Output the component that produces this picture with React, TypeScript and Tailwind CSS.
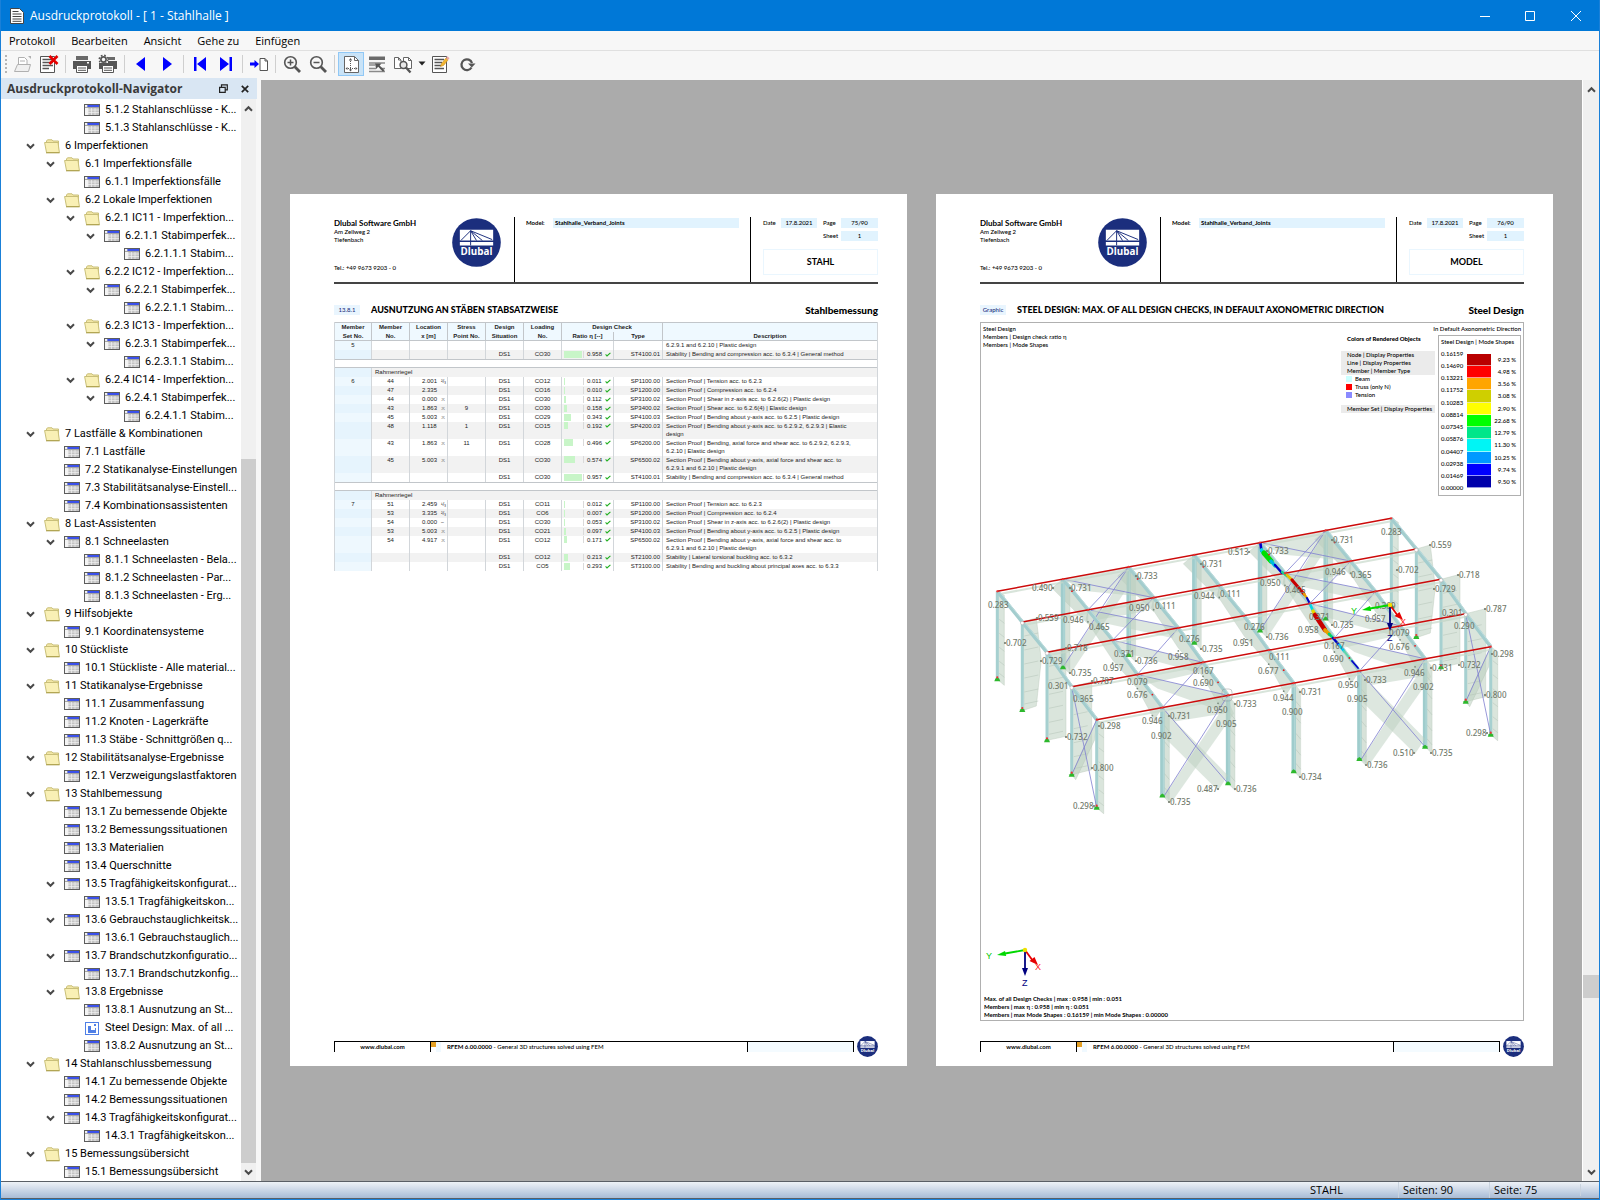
import type { ReactNode } from 'react'
import clsx from 'clsx'

type Kind = 'folder' | 'table' | 'picture'

interface TreeItem {
  level: number
  kind: Kind
  open: boolean
  label: string
}

const f = (level: number, label: string): TreeItem => ({ level, kind: 'folder', open: true, label })
const t = (level: number, label: string, open = false): TreeItem => ({ level, kind: 'table', open, label })

const tree: TreeItem[] = [
  t(3, '5.1.2 Stahlanschlüsse - K...'),
  t(3, '5.1.3 Stahlanschlüsse - K...'),
  f(1, '6 Imperfektionen'),
  f(2, '6.1 Imperfektionsfälle'),
  t(3, '6.1.1 Imperfektionsfälle'),
  f(2, '6.2 Lokale Imperfektionen'),
  f(3, '6.2.1 IC11 - Imperfektion...'),
  t(4, '6.2.1.1 Stabimperfek...', true),
  t(5, '6.2.1.1.1 Stabim...'),
  f(3, '6.2.2 IC12 - Imperfektion...'),
  t(4, '6.2.2.1 Stabimperfek...', true),
  t(5, '6.2.2.1.1 Stabim...'),
  f(3, '6.2.3 IC13 - Imperfektion...'),
  t(4, '6.2.3.1 Stabimperfek...', true),
  t(5, '6.2.3.1.1 Stabim...'),
  f(3, '6.2.4 IC14 - Imperfektion...'),
  t(4, '6.2.4.1 Stabimperfek...', true),
  t(5, '6.2.4.1.1 Stabim...'),
  f(1, '7 Lastfälle & Kombinationen'),
  t(2, '7.1 Lastfälle'),
  t(2, '7.2 Statikanalyse-Einstellungen'),
  t(2, '7.3 Stabilitätsanalyse-Einstell...'),
  t(2, '7.4 Kombinationsassistenten'),
  f(1, '8 Last-Assistenten'),
  t(2, '8.1 Schneelasten', true),
  t(3, '8.1.1 Schneelasten - Bela...'),
  t(3, '8.1.2 Schneelasten - Par...'),
  t(3, '8.1.3 Schneelasten - Erg...'),
  f(1, '9 Hilfsobjekte'),
  t(2, '9.1 Koordinatensysteme'),
  f(1, '10 Stückliste'),
  t(2, '10.1 Stückliste - Alle material...'),
  f(1, '11 Statikanalyse-Ergebnisse'),
  t(2, '11.1 Zusammenfassung'),
  t(2, '11.2 Knoten - Lagerkräfte'),
  t(2, '11.3 Stäbe - Schnittgrößen q...'),
  f(1, '12 Stabilitätsanalyse-Ergebnisse'),
  t(2, '12.1 Verzweigungslastfaktoren'),
  f(1, '13 Stahlbemessung'),
  t(2, '13.1 Zu bemessende Objekte'),
  t(2, '13.2 Bemessungssituationen'),
  t(2, '13.3 Materialien'),
  t(2, '13.4 Querschnitte'),
  t(2, '13.5 Tragfähigkeitskonfigurat...', true),
  t(3, '13.5.1 Tragfähigkeitskon...'),
  t(2, '13.6 Gebrauchstauglichkeitsk...', true),
  t(3, '13.6.1 Gebrauchstauglich...'),
  t(2, '13.7 Brandschutzkonfiguratio...', true),
  t(3, '13.7.1 Brandschutzkonfig...'),
  f(2, '13.8 Ergebnisse'),
  t(3, '13.8.1 Ausnutzung an St...'),
  { level: 3, kind: 'picture', open: false, label: 'Steel Design: Max. of all ...' },
  t(3, '13.8.2 Ausnutzung an St...'),
  f(1, '14 Stahlanschlussbemessung'),
  t(2, '14.1 Zu bemessende Objekte'),
  t(2, '14.2 Bemessungssituationen'),
  t(2, '14.3 Tragfähigkeitskonfigurat...', true),
  t(3, '14.3.1 Tragfähigkeitskon...'),
  f(1, '15 Bemessungsübersicht'),
  t(2, '15.1 Bemessungsübersicht'),
]

const indent = ['', 'pl-[23px]', 'pl-[43px]', 'pl-[63px]', 'pl-[83px]', 'pl-[103px]']

function Chevron({ up = false }: { up?: boolean }) {
  return (
    <svg width="9" height="7" viewBox="0 0 9 7" className={up ? 'rotate-180' : ''}>
      <path d="M1 1.3 L4.5 4.8 L8 1.3" fill="none" stroke="#4a4a4a" strokeWidth="2" />
    </svg>
  )
}

function TreeIcon({ kind }: { kind: Kind }) {
  if (kind === 'folder') {
    return (
      <svg width="16" height="15" viewBox="0 0 16 15" className="shrink-0">
        <path d="M2.5 3.5 V2 L3.5 0.8 H8 L9 2 H14.5 V12" fill="#f3e7a5" stroke="#c9bf79" />
        <path d="M0.6 3.5 H14 L15.4 13.5 H2.5 Z" fill="#f9f0b5" stroke="#c9bf79" />
        <path d="M2 13.8 H15.6" stroke="#a89c45" />
      </svg>
    )
  }
  if (kind === 'picture') {
    return (
      <svg width="16" height="13" viewBox="0 0 16 13" className="shrink-0">
        <rect x="1.5" y="0.5" width="13" height="12" fill="#fff" stroke="#4f7fe6" />
        <path d="M4 4 H7 V8 H11 V6 H12 V11 H4 Z" fill="#4f7fe6" />
        <rect x="10" y="2" width="2" height="2" fill="#4f7fe6" />
      </svg>
    )
  }
  return (
    <svg width="16" height="12" viewBox="0 0 16 12" className="shrink-0">
      <rect x="0.5" y="0.5" width="15" height="11" fill="#c4c4c4" stroke="#5d5d5d" />
      <path d="M1 1 H3 V3 H1 Z M1 4 H4 V11 H1 Z" fill="#f5f5f5" />
      <path d="M3.5 1 H15 V3 H3.5 Z" fill="#3a50f0" />
      <path d="M1 3.5 H15 M1 6 H15 M1 8.5 H15 M4 4 V11 M7.5 4 V11 M11 4 V11" stroke="#f2f2f2" strokeWidth="0.7" />
      <path d="M1 3.4 H15" stroke="#6b6b6b" strokeWidth="0.6" />
    </svg>
  )
}

function Sep() {
  return (
    <div className="flex w-[7px] justify-center">
      <div className="h-[18px] w-px bg-[#cfcfcf]" />
    </div>
  )
}

function Tool({ label, active, children }: { label: string; active?: boolean; children: ReactNode }) {
  return (
    <button
      aria-label={label}
      className={clsx(
        'flex h-[24px] w-[26px] items-center justify-center border',
        active ? 'border-[#90c8f6] bg-[#c9e3f7]' : 'border-transparent',
      )}
    >
      <svg width="20" height="20" viewBox="0 0 20 20">
        {children}
      </svg>
    </button>
  )
}

const pageLines = 'M3.5 5.5 H13 M3.5 8.5 H14 M3.5 11.5 H14 M3.5 14.5 H10'

function Toolbar() {
  return (
    <div className="flex h-[28px] shrink-0 items-center border-t border-[#e0e0e0] bg-[#f7f7f7] pb-[2px]">
      <div className="flex w-[9px] justify-center">
        <div className="h-[18px] border-l-2 border-dotted border-[#b5b5b5]" />
      </div>
      <Tool label="Öffnen">
        <path d="M5.5 10 V3.5 H11.5 L14 6 V10" fill="#fff" stroke="#b0b0b0" />
        <path d="M7 7 H12" stroke="#b0b0b0" />
        <path d="M1.5 17.5 L4.5 10.5 H17.5 L15.5 17.5 Z" fill="#f0f0f0" stroke="#b0b0b0" />
        <path d="M15 2 L18 2 L18 5 Z" fill="#b0b0b0" />
      </Tool>
      <Tool label="Protokoll löschen">
        <path d="M1.5 2.5 H15.5 V18.5 H1.5 Z" fill="#fff" stroke="#555" />
        <path d={pageLines} stroke="#555" strokeWidth="1.3" />
        <path d="M10.5 2 L18.5 10 M18.5 2 L10.5 10" stroke="#e60000" strokeWidth="2.6" />
      </Tool>
      <Sep />
      <Tool label="Drucken">
        <path d="M4 2 H16 V6 H4 Z" fill="#6a6a6a" />
        <path d="M1 7 H19 V15 H1 Z" fill="#555" />
        <path d="M4.5 11.5 H15.5 V18.5 H4.5 Z" fill="#fff" stroke="#555" />
        <path d="M6 14 H14 M6 16.3 H14" stroke="#555" />
        <rect x="15" y="8" width="2" height="1.5" fill="#fff" />
      </Tool>
      <Tool label="Drucker einrichten">
        <path d="M10 3 H17 V6 H10 Z" fill="#6a6a6a" />
        <path d="M1 9 H19 V15 H1 Z M10 7 H19 V9 H10 Z" fill="#555" />
        <path d="M4.5 11.5 H15.5 V18.5 H4.5 Z" fill="#fff" stroke="#555" />
        <path d="M6 14 H14 M6 16.3 H14" stroke="#555" />
        <circle cx="5.5" cy="5.5" r="4.3" fill="none" stroke="#555" strokeWidth="1.4" strokeDasharray="1.7 1.7" />
        <circle cx="5.5" cy="5.5" r="2.6" fill="#f7f7f7" stroke="#555" strokeWidth="1.7" />
      </Tool>
      <Sep />
      <Tool label="Zurück">
        <path d="M14 3 V17 L5 10 Z" fill="#0000ff" />
      </Tool>
      <Tool label="Weiter">
        <path d="M6 3 V17 L15 10 Z" fill="#0000ff" />
      </Tool>
      <Sep />
      <Tool label="Erste Seite">
        <path d="M4 3 H6.5 V17 H4 Z M16 3 V17 L7 10 Z" fill="#0000ff" />
      </Tool>
      <Tool label="Letzte Seite">
        <path d="M16 3 H13.5 V17 H16 Z M4 3 V17 L13 10 Z" fill="#0000ff" />
      </Tool>
      <Sep />
      <Tool label="Gehe zu Seite">
        <path d="M1 8.5 H5.5 V6 L10 10 L5.5 14 V11.5 H1 Z" fill="#0000ff" />
        <path d="M11 4.5 H16 L18.5 7 V16.5 H11 Z" fill="#fff" stroke="#555" />
        <path d="M16 4.5 V7 H18.5" fill="none" stroke="#555" />
      </Tool>
      <Sep />
      <Tool label="Vergrößern">
        <circle cx="8.5" cy="8.5" r="5.8" fill="none" stroke="#555" strokeWidth="1.6" />
        <path d="M8.5 5.5 V11.5 M5.5 8.5 H11.5" stroke="#555" strokeWidth="1.5" />
        <path d="M12.8 12.8 L18 18" stroke="#555" strokeWidth="2.8" />
      </Tool>
      <Tool label="Verkleinern">
        <circle cx="8.5" cy="8.5" r="5.8" fill="none" stroke="#555" strokeWidth="1.6" />
        <path d="M5.5 8.5 H11.5" stroke="#555" strokeWidth="1.5" />
        <path d="M12.8 12.8 L18 18" stroke="#555" strokeWidth="2.8" />
      </Tool>
      <Sep />
      <Tool label="Ganze Seite" active>
        <path d="M3.5 2.5 H13.5 L17.5 6.5 V18.5 H3.5 Z" fill="#fff" stroke="#666" />
        <path d="M13.5 2.5 V6.5 H17.5" fill="none" stroke="#666" />
        <path d="M9.5 5 V16 M5 14.5 H16" stroke="#555" strokeDasharray="1 1" />
        <path d="M7.8 6.5 L9.5 4 L11.2 6.5 Z M7.8 15.5 L9.5 17.5 L11.2 15.5 Z M6.5 13 L4.5 14.5 L6.5 16 Z M14.5 13 L16.5 14.5 L14.5 16 Z" fill="#555" />
      </Tool>
      <Tool label="Auswahl">
        <path d="M2 2.5 H18 V6 H2 Z" fill="#6a6a6a" />
        <path d="M2 9 H18 M2 11 H8 M2 14.5 H9 M2 17.5 H18 M13 14.5 H18" stroke="#8a8a8a" strokeWidth="1.4" />
        <path d="M8 9.5 L14.5 9.5 L12.6 11.4 L17.5 16.2 L16 17.7 L11.2 12.8 L9.2 15 Z" fill="#555" />
      </Tool>
      <Tool label="Suchen">
        <path d="M1.5 3.5 H5.5 L8 6 V14.5 H1.5 Z M10.5 3.5 H15.5 L18.5 6.5 V14.5 H10.5 Z" fill="#fff" stroke="#666" />
        <path d="M5.5 3.5 V6 H8 M15.5 3.5 V6.5 H18.5" fill="none" stroke="#666" />
        <circle cx="10.5" cy="11" r="3.4" fill="#e8e8e8" stroke="#555" strokeWidth="1.5" />
        <path d="M13 13.5 L17.5 18.5" stroke="#555" strokeWidth="2.4" />
      </Tool>
      <div className="flex w-[11px] justify-center">
        <svg width="8" height="5" viewBox="0 0 8 5">
          <path d="M0.5 0.5 H7.5 L4 4.5 Z" fill="#222" />
        </svg>
      </div>
      <Tool label="Bearbeiten">
        <path d="M2.5 2.5 H16.5 V18.5 H2.5 Z" fill="#fff" stroke="#555" />
        <path d="M4.5 5.5 H14 M4.5 8.5 H12 M4.5 11.5 H11 M4.5 14.5 H14" stroke="#555" strokeWidth="1.3" />
        <path d="M10.5 12.5 L11.5 9.5 L16 4 L18 6 L13.5 11.5 Z" fill="#f2b632" stroke="#c98d1b" strokeWidth="0.6" />
        <path d="M16 4 L17.5 2.2 L19.5 4.2 L18 6 Z" fill="#e8a5a5" />
      </Tool>
      <div className="pl-px">
        <Tool label="Aktualisieren">
          <path d="M14.5 13.5 A5.4 5.4 0 1 1 15 9" fill="none" stroke="#555" strokeWidth="2.3" />
          <path d="M11 9.5 H18.5 L14.8 13.5 Z" fill="#555" />
        </Tool>
      </div>
    </div>
  )
}

function Navigator() {
  return (
    <aside className="flex w-[256px] shrink-0 flex-col bg-white">
      <div className="flex h-[21px] shrink-0 items-center bg-[#d9e6f3] pl-[6px]">
        <h2 className="flex-1 font-['Open_Sans',sans-serif] text-[12px] font-bold text-[#3a3a3a]">
          Ausdruckprotokoll-Navigator
        </h2>
        <button aria-label="Andocken" className="flex w-[20px] justify-center">
          <svg width="9" height="9" viewBox="0 0 9 9">
            <path d="M2.5 3 V0.8 H8.3 V5.8 H6.5 M0.6 3.3 H6.2 V8.3 H0.6 Z" fill="none" stroke="#222" strokeWidth="1.2" />
          </svg>
        </button>
        <button aria-label="Schließen" className="flex w-[24px] justify-center">
          <svg width="8" height="8" viewBox="0 0 8 8">
            <path d="M0.8 0.8 L7.2 7.2 M7.2 0.8 L0.8 7.2" stroke="#222" strokeWidth="1.7" />
          </svg>
        </button>
      </div>
      <div className="flex min-h-0 flex-1">
        <ul className="min-w-0 flex-1 overflow-hidden pt-[2px]">
          {tree.map((item) => (
            <li key={item.label} className={clsx('flex h-[18px] items-center whitespace-nowrap', indent[item.level])}>
              <span className="w-[20px] shrink-0 pl-[2px]">{item.open && <Chevron />}</span>
              <TreeIcon kind={item.kind} />
              <span className="pl-[5px] font-['Roboto',sans-serif] text-[11px] text-black">{item.label}</span>
            </li>
          ))}
        </ul>
        <div className="flex w-[15px] flex-col items-center bg-[#f0f0f0]">
          <div className="flex h-[18px] items-center">
            <Chevron up />
          </div>
          <div className="flex w-full flex-1 flex-col">
            <div className="flex-[342]" />
            <div className="flex-[704] bg-[#cdcdcd]" />
          </div>
          <div className="flex h-[18px] items-center">
            <Chevron />
          </div>
        </div>
        <div className="w-px bg-[#f7f7f7]" />
      </div>
    </aside>
  )
}

function Logo({ size }: { size: number }) {
  return (
    <svg width={size} height={size} viewBox="0 0 50 50" className="shrink-0">
      <circle cx="25" cy="25" r="24.8" fill="#1b2e7d" />
      <path d="M8 12 H42 V23 H8 Z" fill="#fff" />
      <path d="M8 24.5 H42 V28 H8 Z" fill="#fff" />
      <path d="M19 13 V28 M19 13 L9 23 M19 13 L25 23 M19 13 L31 23 M19 13 L41 22" stroke="#1b2e7d" strokeWidth="1" fill="none" />
      <text x="25" y="38" textAnchor="middle" fill="#fff" fontSize="10" fontWeight="700" fontFamily="'Open Sans', sans-serif">
        Dlubal
      </text>
    </svg>
  )
}

interface SheetProps {
  pageNo: string
  part: string
  badge: string
  title: string
  right: string
  children: ReactNode
}

function Sheet({ pageNo, part, badge, title, right, children }: SheetProps) {
  return (
    <article className="flex aspect-[617/872] min-w-0 flex-1 flex-col bg-white pt-[23px] pr-[29px] pb-[9px] pl-[44px] font-['Lato',sans-serif] text-[6px] leading-[8px] font-medium text-black">
      <header className="flex h-[67px] shrink-0 border-b-2 border-[#444]">
        <div className="flex w-[181px] justify-between border-r border-black pt-px pr-[13px]">
          <address className="not-italic">
            <p className="text-[8px] leading-[10px] font-bold">Dlubal Software GmbH</p>
            <p>Am Zellweg 2</p>
            <p>Tiefenbach</p>
            <p className="pt-[20px]">Tel.: +49 9673 9203 - 0</p>
          </address>
          <Logo size={49} />
        </div>
        <div className="flex flex-1 items-start border-r border-black pt-px pr-[11px] pl-[11px] leading-[10px] font-bold">
          <span className="w-[27px]">Model:</span>
          <span className="flex-1 bg-[#e1f3fe] pl-[2px]">Stahlhalle_Verband_Joints</span>
        </div>
        <div className="w-[127px] pt-px pl-[12px] leading-[10px]">
          <div className="grid grid-cols-[18px_36px_24px_37px] gap-y-[3px]">
            <span>Date</span>
            <span className="bg-[#e1f3fe] text-center">17.8.2021</span>
            <span className="pl-[6px]">Page</span>
            <span className="bg-[#e1f3fe] text-center">{pageNo}</span>
            <span className="col-start-3 pl-[6px]">Sheet</span>
            <span className="bg-[#e1f3fe] text-center">1</span>
          </div>
          <div className="mt-[8px] flex h-[26px] items-center justify-center border border-[#eaf6fe] text-[9px] font-bold">
            {part}
          </div>
        </div>
      </header>
      <div className="mt-[21px] flex h-[10px] shrink-0 items-center leading-[10px]">
        <span className="w-[26px] bg-[#e9f5fe] text-center text-[#1b2e7d]">{badge}</span>
        <h1 className="flex-1 pl-[11px] text-[9px] font-black whitespace-nowrap">{title}</h1>
        <h2 className="text-[10px] font-black">{right}</h2>
      </div>
      <div className="mt-[7px] flex min-h-0 flex-1 flex-col">{children}</div>
      <footer className="mt-[15px] flex shrink-0 items-start gap-[3px]">
        <div className="mt-[5px] flex h-[11px] flex-1 border-x border-t border-black leading-[10px]">
          <a href="#dlubal" className="w-[96px] border-r border-black text-center font-bold">
            www.dlubal.com
          </a>
          <div className="flex w-[317px] border-r border-black">
            <div className="h-[5px] w-[5px] bg-[#e5a024]" />
            <div className="mr-[6px] w-[5px] bg-[#f0f9ff]" />
            <span>
              <b>RFEM 6.00.0000</b> - General 3D structures solved using FEM
            </span>
          </div>
          <div className="flex-1 bg-[#f4fbff]" />
        </div>
        <Logo size={21} />
      </footer>
    </article>
  )
}

interface Check {
  set?: string
  member?: string
  loc?: string
  mark?: string
  stress?: string
  co?: string
  ratio?: string
  type?: string
  desc: string[]
}

interface Group {
  name?: string
  rows: Check[]
}

const groups: Group[] = [
  {
    rows: [
      { set: '5', desc: ['6.2.9.1 and 6.2.10 | Plastic design'] },
      { co: 'CO30', ratio: '0.958', type: 'ST4100.01', desc: ['Stability | Bending and compression acc. to 6.3.4 | General method'] },
    ],
  },
  {
    name: 'Rahmenriegel',
    rows: [
      { set: '6', member: '44', loc: '2.001', mark: '²/₃', co: 'CO12', ratio: '0.011', type: 'SP1100.00', desc: ['Section Proof | Tension acc. to 6.2.3'] },
      { member: '47', loc: '2.335', co: 'CO16', ratio: '0.010', type: 'SP1200.00', desc: ['Section Proof | Compression acc. to 6.2.4'] },
      { member: '44', loc: '0.000', mark: '≍', co: 'CO30', ratio: '0.112', type: 'SP3100.02', desc: ['Section Proof | Shear in z-axis acc. to 6.2.6(2) | Plastic design'] },
      { member: '43', loc: '1.863', mark: '≍', stress: '9', co: 'CO30', ratio: '0.158', type: 'SP3400.02', desc: ['Section Proof | Shear acc. to 6.2.6(4) | Elastic design'] },
      { member: '45', loc: '5.003', mark: '≍', co: 'CO29', ratio: '0.343', type: 'SP4100.03', desc: ['Section Proof | Bending about y-axis acc. to 6.2.5 | Plastic design'] },
      { member: '48', loc: '1.118', stress: '1', co: 'CO15', ratio: '0.192', type: 'SP4200.03', desc: ['Section Proof | Bending about y-axis acc. to 6.2.9.2, 6.2.9.3 | Elastic', 'design'] },
      { member: '43', loc: '1.863', mark: '≍', stress: '11', co: 'CO28', ratio: '0.496', type: 'SP6200.00', desc: ['Section Proof | Bending, axial force and shear acc. to 6.2.9.2, 6.2.9.3,', '6.2.10 | Elastic design'] },
      { member: '45', loc: '5.003', mark: '≍', co: 'CO30', ratio: '0.574', type: 'SP6500.02', desc: ['Section Proof | Bending about y-axis, axial force and shear acc. to', '6.2.9.1 and 6.2.10 | Plastic design'] },
      { co: 'CO30', ratio: '0.957', type: 'ST4100.01', desc: ['Stability | Bending and compression acc. to 6.3.4 | General method'] },
    ],
  },
  {
    name: 'Rahmenriegel',
    rows: [
      { set: '7', member: '51', loc: '2.459', mark: '¹/₃', co: 'CO11', ratio: '0.012', type: 'SP1100.00', desc: ['Section Proof | Tension acc. to 6.2.3'] },
      { member: '53', loc: '3.335', mark: '²/₃', co: 'CO6', ratio: '0.007', type: 'SP1200.00', desc: ['Section Proof | Compression acc. to 6.2.4'] },
      { member: '54', loc: '0.000', mark: '–', co: 'CO30', ratio: '0.053', type: 'SP3100.02', desc: ['Section Proof | Shear in z-axis acc. to 6.2.6(2) | Plastic design'] },
      { member: '53', loc: '5.003', mark: '≍', co: 'CO21', ratio: '0.097', type: 'SP4100.03', desc: ['Section Proof | Bending about y-axis acc. to 6.2.5 | Plastic design'] },
      { member: '54', loc: '4.917', mark: '≍', co: 'CO12', ratio: '0.171', type: 'SP6500.02', desc: ['Section Proof | Bending about y-axis, axial force and shear acc. to', '6.2.9.1 and 6.2.10 | Plastic design'] },
      { co: 'CO12', ratio: '0.213', type: 'ST2100.00', desc: ['Stability | Lateral torsional buckling acc. to 6.3.2'] },
      { co: 'CO5', ratio: '0.293', type: 'ST3100.00', desc: ['Stability | Bending and buckling about principal axes acc. to 6.3.3'] },
    ],
  },
]

const cell = 'border-r border-[#d2d6da] p-0 align-top'

function CheckRow({ row, shaded }: { row: Check; shaded: boolean }) {
  const tall = row.desc.length > 1
  return (
    <tr className={clsx(tall ? 'h-[17px] leading-[8px]' : 'h-[9px] leading-[9px]', shaded ? 'bg-[#f2f2f2]' : 'bg-white')}>
      <td className={clsx(cell, shaded ? 'bg-[#e6f4fd]' : 'bg-[#eef8fe]', 'text-center')}>{row.set}</td>
      <td className={clsx(cell, 'text-center')}>{row.member}</td>
      <td className={cell}>
        <div className="flex pl-[12px]">
          <span className="w-[19px]">{row.loc}</span>
          <span className="text-[5px]">{row.mark}</span>
        </div>
      </td>
      <td className={clsx(cell, 'text-center')}>{row.stress}</td>
      <td className={clsx(cell, 'text-center')}>{row.co && 'DS1'}</td>
      <td className={clsx(cell, 'text-center')}>{row.co}</td>
      <td className={cell}>
        {row.ratio && (
          <div className="flex items-center pl-[2px]">
            <div className="mr-[3px] flex h-[7px] w-[20px] border-r border-[#dadada]">
              <div className="bg-[#c8f5c8]" style={{ width: `${Math.max(Number(row.ratio) * 100, 5)}%` }} />
            </div>
            <span className="w-[18px]">{row.ratio}</span>
            <svg width="6" height="5" viewBox="0 0 6 5">
              <path d="M0.6 2.4 L2 4 L5.4 0.8" fill="none" stroke="#1fae1f" strokeWidth="1.1" />
            </svg>
          </div>
        )}
      </td>
      <td className={clsx(cell, 'pr-[2px] text-right')}>{row.type}</td>
      <td className="p-0 pl-[3px] align-top whitespace-nowrap">
        {row.desc.map((line) => (
          <div key={line}>{line}</div>
        ))}
      </td>
    </tr>
  )
}

function CheckTable() {
  return (
    <table className="w-full table-fixed border-separate border-spacing-0 border-x border-[#d2d6da] font-['Liberation_Sans',sans-serif] text-[6px] leading-[9px] font-normal text-[#222]">
      <colgroup>
        <col className="w-[37px]" />
        <col className="w-[38px]" />
        <col className="w-[38px]" />
        <col className="w-[38px]" />
        <col className="w-[38px]" />
        <col className="w-[38px]" />
        <col className="w-[52px]" />
        <col className="w-[49px]" />
        <col />
      </colgroup>
      <thead className="bg-[#eff9ff] font-bold">
        <tr className="h-[10px]">
          <th className="border-t border-r border-[#c2c6ca] p-0">Member</th>
          <th className="border-t border-r border-[#c2c6ca] p-0">Member</th>
          <th className="border-t border-r border-[#c2c6ca] p-0">Location</th>
          <th className="border-t border-r border-[#c2c6ca] p-0">Stress</th>
          <th className="border-t border-r border-[#c2c6ca] p-0">Design</th>
          <th className="border-t border-r border-[#c2c6ca] p-0">Loading</th>
          <th colSpan={2} className="border-t border-r border-[#c2c6ca] p-0">Design Check</th>
          <th className="border-t border-[#c2c6ca] p-0" />
        </tr>
        <tr className="h-[9px] leading-[8px]">
          <th className="border-r border-b border-[#c2c6ca] p-0">Set No.</th>
          <th className="border-r border-b border-[#c2c6ca] p-0">No.</th>
          <th className="border-r border-b border-[#c2c6ca] p-0">x [m]</th>
          <th className="border-r border-b border-[#c2c6ca] p-0">Point No.</th>
          <th className="border-r border-b border-[#c2c6ca] p-0">Situation</th>
          <th className="border-r border-b border-[#c2c6ca] p-0">No.</th>
          <th className="border-r border-b border-[#c2c6ca] p-0">Ratio η [--]</th>
          <th className="border-r border-b border-[#c2c6ca] p-0">Type</th>
          <th className="border-b border-[#c2c6ca] p-0">Description</th>
        </tr>
      </thead>
      {groups.map((group, g) => (
        <tbody key={g}>
          {g > 0 && (
            <>
              <tr className="h-[9px]">
                <td colSpan={9} className="border-y border-[#c2c6ca] p-0" />
              </tr>
              <tr className="h-[9px] bg-[#f2f2f2]">
                <td className="border-r border-[#d2d6da] bg-[#e6f4fd] p-0" />
                <td colSpan={8} className="p-0 pl-[3px]">
                  {group.name}
                </td>
              </tr>
            </>
          )}
          {group.rows.map((row, i) => (
            <CheckRow key={i} row={row} shaded={i % 2 === 1} />
          ))}
        </tbody>
      ))}
    </table>
  )
}

/* ---------- hall model ---------- */

type Pt = [number, number]

// axis points of the first frame, the other frames are shifted by STEP
const BASE: Pt[] = [
  [27.3, 91.3],
  [52.3, 122],
  [77, 152.3],
  [101.7, 186.7],
  [126.7, 219.7],
]
const STEP: Pt = [65.67, -12.17]
const HEIGHT = 88

const node = (frame: number, j: number, dx = 0, dy = 0): Pt => [
  BASE[j][0] + frame * STEP[0] + dx,
  BASE[j][1] + frame * STEP[1] + dy,
]
const poly = (pts: Pt[]) => pts.map((p) => `${p[0].toFixed(1)},${p[1].toFixed(1)}`).join(' ')

const labels: [number, number, string][] = [
  [258, 52, '0.513'], [232, 64, '0.731'], [167, 76, '0.733'], [62, 88, '0.490'], [101, 88, '0.731'],
  [224, 96, '0.944'], [250, 94, '0.111'], [18, 105, '0.283'], [68, 118, '0.559'], [159, 108, '0.950'],
  [185, 106, '0.111'], [93, 120, '0.946'], [119, 127, '0.465'], [274, 127, '0.276'], [36, 143, '0.702'],
  [97, 148, '0.718'], [209, 139, '0.276'], [232, 149, '0.735'], [263, 143, '0.951'], [144, 154, '0.371'],
  [198, 157, '0.958'], [72, 161, '0.729'], [167, 161, '0.736'], [133, 168, '0.957'], [101, 173, '0.735'],
  [223, 171, '0.167'], [78, 186, '0.301'], [123, 181, '0.787'], [157, 182, '0.079'], [223, 183, '0.690'],
  [103, 199, '0.365'], [157, 195, '0.676'], [266, 204, '0.733'], [172, 221, '0.946'], [200, 216, '0.731'],
  [237, 210, '0.950'], [246, 224, '0.905'], [130, 226, '0.298'], [181, 236, '0.902'], [97, 237, '0.732'],
  [123, 268, '0.800'], [103, 306, '0.298'], [200, 302, '0.735'], [227, 289, '0.487'], [266, 289, '0.736'],
  [363, 40, '0.731'], [411, 32, '0.283'], [461, 45, '0.559'], [298, 51, '0.733'], [355, 72, '0.946'],
  [381, 75, '0.365'], [428, 70, '0.702'], [489, 75, '0.718'], [290, 83, '0.950'], [315, 90, '0.465'],
  [465, 89, '0.729'], [405, 106, '0.369'], [395, 119, '0.957'], [472, 113, '0.301'], [516, 109, '0.787'],
  [484, 126, '0.290'], [328, 130, '0.958'], [339, 117, '0.371'], [363, 125, '0.735'], [298, 137, '0.736'],
  [419, 133, '0.079'], [419, 147, '0.676'], [354, 146, '0.167'], [353, 159, '0.690'], [523, 154, '0.298'],
  [299, 157, '0.111'], [288, 171, '0.677'], [462, 168, '0.731'], [490, 165, '0.732'], [434, 173, '0.946'],
  [368, 185, '0.950'], [396, 180, '0.733'], [331, 192, '0.731'], [303, 198, '0.944'], [443, 187, '0.902'],
  [377, 199, '0.905'], [312, 212, '0.900'], [516, 195, '0.800'], [496, 233, '0.298'], [423, 253, '0.510'],
  [462, 253, '0.735'], [397, 265, '0.736'], [331, 277, '0.734'],
]

// values with a measuring dot before or behind the number
const dotBefore = ['0.731', '0.733', '0.702', '0.735', '0.736', '0.729', '0.734', '0.732', '0.800', '0.559', '0.718', '0.787']
const dotBehind = ['0.513', '0.490', '0.487', '0.510']

function dotX(x: number, y: number, text: string) {
  // the brace values at the column feet carry the dot behind
  if (text === '0.298') return y > 230 ? x + 21 : x - 1
  if (dotBefore.includes(text)) return x - 1
  if (dotBehind.includes(text)) return x + 21
  return null
}

const FILL = '#bccfbf'

function EndWall({ i }: { i: number }) {
  return (
    <g>
      <g fill={FILL} fillOpacity="0.55" stroke="#b5c6b7" strokeWidth="0.4">
        <polygon points={poly([node(i, 0), node(i, 0, 7, 4), node(i, 0, 7, 94), node(i, 0, 0, HEIGHT)])} />
        <polygon
          points={poly([node(i, 1), node(i, 1, 14, -4), node(i, 1, 19, 38), node(i, 1, 14, 84), node(i, 1, 2, HEIGHT)])}
        />
        <polygon points={poly([node(i, 2), node(i, 2, 19, -5), node(i, 2, 19, 84), node(i, 2, 0, HEIGHT)])} />
        <polygon points={poly([node(i, 3), node(i, 3, 20, -5), node(i, 3, 20, 83), node(i, 3, 0, HEIGHT)])} />
        <polygon points={poly([node(i, 4), node(i, 4, 7, 5), node(i, 4, 7, 94), node(i, 4, 0, HEIGHT)])} />
        <polygon points={poly([node(i, 4), node(i, 3, 0, HEIGHT), node(i, 3, 4, 93), node(i, 4, -2, 20)])} />
      </g>
      {[0, 1, 2, 3, 4].map((j) =>
        [14, 28, 42, 56, 70, 82].map((dy) => {
          const [x, y] = node(i, j, 2, dy)
          const end = j === 0 || j === 4
          return <path key={`${j}-${dy}`} d={`M${x} ${y} l${end ? 5 : 14} ${end ? 4 : -3}`} stroke="#b3c3b6" strokeWidth="0.5" />
        }),
      )}
      {[0, 1, 2, 3, 4].map((j) => {
        const [x, y] = node(i, j)
        return <path key={j} d={`M${x} ${y} v${HEIGHT}`} stroke="#a6d0d0" strokeWidth="3" />
      })}
    </g>
  )
}

function BracedBay({ i }: { i: number }) {
  return (
    <g>
      <g fill={FILL} fillOpacity="0.5">
        <polygon points={poly([node(i, 0), node(i + 1, 0), node(i + 1, 1), node(i, 0, 22, 12)])} />
        <polygon points={poly([node(i, 1), node(i + 1, 1), node(i + 1, 1, -10, 14), node(i, 1, 10, 10)])} />
        <polygon points={poly([node(i, 1), node(i + 1, 2), node(i + 1, 2, -6, 10), node(i, 1, 10, 12)])} />
        <polygon points={poly([node(i, 2), node(i + 1, 3), node(i + 1, 3, -6, 10), node(i, 2, 10, 12)])} />
        <polygon points={poly([node(i, 3), node(i + 1, 4), node(i + 1, 4, -6, 16), node(i, 3, 20, 14)])} />
        <polygon points={poly([node(i, 3), node(i + 1, 3), node(i + 1, 3, -4, 10), node(i, 3, 8, 10)])} />
        <polygon points={poly([node(i, 4), node(i + 1, 4), node(i + 1, 4, -4, 18), node(i, 4, 12, 14)])} />
        <polygon points={poly([node(i + 1, 0), node(i + 1, 0, -2, 22), node(i, 0, 8, 94), node(i, 0, 2, 84), node(i, 0, 40, 30)])} />
        <polygon points={poly([node(i, 4, 2, 3), node(i + 1, 4, 0, HEIGHT - 8), node(i + 1, 4, -10, 95), node(i, 4, 2, 30)])} />
        <polygon points={poly([node(i + 1, 4, 0, 5), node(i + 1, 4, 6, 18), node(i, 4, 9, 95), node(i, 4, 2, HEIGHT)])} />
      </g>
      <g stroke="#7f7fd0" strokeWidth="0.8" fill="none">
        {[0, 1, 2, 3].map((j) => (
          <polyline key={j} points={poly([node(i, j), node(i + 1, j + 1)])} />
        ))}
        {[0, 1, 2, 3].map((j) => (
          <polyline key={j} points={poly([node(i + 1, j), node(i, j + 1)])} />
        ))}
        <polyline points={poly([node(i + 1, 0), node(i, 0, 0, HEIGHT)])} />
        <polyline points={poly([node(i, 4), node(i + 1, 4, 0, HEIGHT)])} />
        <polyline points={poly([node(i + 1, 4), node(i, 4, 2, HEIGHT)])} />
      </g>
    </g>
  )
}

function InnerFrame({ i }: { i: number }) {
  return (
    <g>
      <g fill={FILL} fillOpacity="0.6" stroke="#b5c6b7" strokeWidth="0.3">
        <polygon points={poly([node(i, 0), node(i, 0, 7, 8), node(i, 0, 7, 95), node(i, 0, 0, HEIGHT)])} />
        <polygon points={poly([node(i, 0), node(i, 0, -11, 9), node(i, 0, 10, 30), node(i, 1, 0, 14), node(i, 1)])} />
        <polygon points={poly([node(i, 1), node(i, 1, -2, 10), node(i, 2, 0, 20), node(i, 3, 0, 14), node(i, 4, -8, 12), node(i, 4)])} />
        <polygon points={poly([node(i, 4), node(i, 4, 7, 8), node(i, 4, 7, 95), node(i, 4, 0, HEIGHT)])} />
      </g>
      {[18, 34, 50, 66, 80].map((dy) => {
        const [x, y] = node(i, 4, 2, dy)
        return <path key={dy} d={`M${x} ${y} l5 6`} stroke="#b3c3b6" strokeWidth="0.5" />
      })}
      {[0, 4].map((j) => {
        const [x, y] = node(i, j)
        return (
          <g key={j}>
            <path d={`M${x} ${y} v${HEIGHT}`} stroke="#9fcccc" strokeWidth="4.4" />
            <path d={`M${x + 1} ${y} v${HEIGHT}`} stroke="#b4d9d9" strokeWidth="1" />
          </g>
        )
      })}
    </g>
  )
}

// utilisation colours along the highlighted frame
const hot: [number, number, number, number, string, number][] = [
  [290.5, 44, 291.5, 51, '#0000c8', 2.6],
  [291.5, 50, 294, 54, '#00d8e8', 3.6],
  [294, 53, 301, 61, '#00e000', 5],
  [301, 61, 305, 66, '#00b8e0', 3.4],
  [305, 65, 312, 73, '#0000c8', 2.4],
  [312, 72, 317, 76, '#19d28c', 2.4],
  [317, 75, 322, 80, '#e8c000', 2.8],
  [322, 80, 334, 94, '#c80000', 3.2],
  [334, 94, 337, 98, '#e8a000', 2.2],
  [337, 98, 340, 104, '#0000c8', 2],
  [340, 104, 343, 111, '#00d8e8', 2.6],
  [343, 111, 345, 115, '#e8d800', 3.4],
  [345, 115, 355, 130, '#c80000', 4.6],
  [355, 130, 359, 134, '#e8a000', 3.8],
  [359, 134, 363, 138, '#00d070', 2.6],
  [363, 138, 369, 145, '#0000c8', 2.4],
  [369, 145, 374, 151, '#00c8f0', 2.6],
  [374, 151, 382, 161, '#5fd8a8', 2],
  [382, 161, 388, 168, '#0000c8', 1.8],
]

function Axes({ x, y }: { x: number; y: number }) {
  return (
    <g fontFamily="'Liberation Sans', sans-serif" fontSize="9">
      <path d={`M${x} ${y} l-20 3.5`} stroke="#00d800" strokeWidth="1.8" />
      <path d={`M${x - 28} ${y + 5} l8 -4 l1.2 5 Z`} fill="#00d800" />
      <path d={`M${x} ${y} l8 11`} stroke="#e60000" strokeWidth="1.8" />
      <path d={`M${x + 13} ${y + 15} l-8.5 -4 l5 -4 Z`} fill="#e60000" />
      <path d={`M${x} ${y} v20`} stroke="#00007f" strokeWidth="1.8" />
      <path d={`M${x} ${y + 26} l-3 -8 h6 Z`} fill="#00007f" />
      <circle cx={x} cy={y} r="2.2" fill="#f0e000" />
      <text x={x - 39} y={y + 9} fill="#00c800">Y</text>
      <text x={x + 10} y={y + 20} fill="#ff2020">X</text>
      <text x={x - 3} y={y + 36} fill="#00007f">Z</text>
    </g>
  )
}

function HallModel() {
  const inner = [1, 2, 3, 4, 5]
  const all = [0, 1, 2, 3, 4, 5, 6]
  return (
    <svg viewBox="11 10 542 310" className="mt-[14px] w-full shrink-0">
      <EndWall i={6} />
      {inner.map((i) => (
        <InnerFrame key={i} i={i} />
      ))}
      <BracedBay i={4} />
      <BracedBay i={1} />
      <EndWall i={0} />
      <g stroke="#7f7fd0" strokeWidth="0.8">
        {[0, 6].map((i) => (
          <g key={i} fill="none">
            <polyline points={poly([node(i, 3), node(i, 4, 0, HEIGHT)])} />
            <polyline points={poly([node(i, 4), node(i, 3, 0, HEIGHT)])} />
          </g>
        ))}
      </g>
      {[0, 1, 2, 3, 4].map((j) => (
        <polyline key={j} points={poly([node(0, j, 1, 3), node(6, j, 0, 3)])} stroke="#c8d8ca" strokeWidth="2" strokeOpacity="0.7" />
      ))}
      {all.map((i) => (
        <g key={i} fill="none">
          <polyline points={poly([0, 1, 2, 3, 4].map((j) => node(i, j)))} stroke="#a3cdce" strokeWidth="3.6" />
          <polyline points={poly([0, 1, 2, 3, 4].map((j) => node(i, j, 1, -1)))} stroke="#bddcdd" strokeWidth="1" />
        </g>
      ))}
      {[0, 1, 2, 3, 4].map((j) => (
        <polyline key={j} points={poly([node(0, j), node(6, j)])} stroke="#cc0a0a" strokeWidth="1.5" />
      ))}
      {hot.map(([x1, y1, x2, y2, color, w]) => (
        <path key={x1 + y1} d={`M${x1} ${y1} L${x2} ${y2}`} stroke={color} strokeWidth={w} strokeLinecap="round" />
      ))}
      {all.map((i) =>
        [0, 1, 2, 3, 4].map((j) => {
          const [x, y] = node(i, j)
          const end = i === 0 || i === 6
          const grounded = end || j === 0 || j === 4
          return (
            <g key={`${i}-${j}`}>
              {end && j > 0 && j < 4 ? (
                <circle cx={x} cy={y + 1} r="1.8" fill="#fff" stroke="#b8a8a8" strokeWidth="0.5" />
              ) : (
                <circle cx={x} cy={y} r="1.1" fill="#e33" />
              )}
              {grounded && <path d={`M${x - 3} ${y + HEIGHT + 2} l1 -2.5 l2 -1.5 l2 1.5 l1 2.5 Z`} fill="#2db82d" />}
              {end && <circle cx={x} cy={y + HEIGHT - 2} r="1.1" fill="#e33" />}
            </g>
          )
        }),
      )}
      {inner.map((i) => (
        <g key={i}>
          <circle cx={node(i, 0)[0] + 9} cy={node(i, 0)[1] + 12} r="0.9" fill="#e11" />
          <circle cx={node(i, 4)[0] - 10} cy={node(i, 4)[1] - 13} r="0.9" fill="#e11" />
          <circle cx={node(i, 1)[0]} cy={node(i, 1)[1] + 12} r="0.9" fill="#7b8a7d" />
          <circle cx={node(i, 2)[0]} cy={node(i, 2)[1] + 23} r="0.9" fill="#7b8a7d" />
          <circle cx={node(i, 3)[0]} cy={node(i, 3)[1] + 14} r="0.9" fill="#7b8a7d" />
          <circle cx={node(i, 4)[0] - 10} cy={node(i, 4)[1] + 8} r="0.9" fill="#7b8a7d" />
        </g>
      ))}
      <rect x="252" y="189" width="10" height="12" rx="3" fill="none" stroke="#999" strokeWidth="0.5" />
      <g fontFamily="'Noto Sans', sans-serif" fontSize="8" fill="#727a6c">
        {labels.map(([x, y, text]) => {
          const dot = dotX(x, y, text)
          return (
            <g key={`${x}-${y}`}>
              {dot !== null && <circle cx={dot} cy={y} r="1.1" />}
              <text x={x} y={y + 3}>
                {text}
              </text>
            </g>
          )
        })}
      </g>
      <Axes x={420} y={105} />
    </svg>
  )
}

const scaleValues = [
  '0.16159', '0.14690', '0.13221', '0.11752', '0.10283', '0.08814',
  '0.07345', '0.05876', '0.04407', '0.02938', '0.01469', '0.00000',
]
const shares: [string, string][] = [
  ['bg-[#b90000]', '9.23 %'],
  ['bg-[#ff0000]', '4.98 %'],
  ['bg-[#ffa500]', '3.56 %'],
  ['bg-[#cfcf00]', '3.08 %'],
  ['bg-[#ffff00]', '2.90 %'],
  ['bg-[#00ff00]', '22.68 %'],
  ['bg-[#00e68a]', '12.79 %'],
  ['bg-[#00f5f5]', '11.30 %'],
  ['bg-[#0099ff]', '10.25 %'],
  ['bg-[#0000ff]', '9.74 %'],
  ['bg-[#0000aa]', '9.50 %'],
]

function ModelGraphic() {
  return (
    <div className="flex min-h-0 flex-1 flex-col border border-[#b0b0b0]">
      <div className="flex shrink-0 justify-end gap-[3px] pt-[2px] pr-[2px] pl-[2px]">
        <div className="flex-1">
          <p>Steel Design</p>
          <p>Members | Design check ratio η</p>
          <p>Members | Mode Shapes</p>
        </div>
        <div className="w-[94px] pt-[10px]">
          <p className="pl-[6px] font-black">Colors of Rendered Objects</p>
          <div className="mt-[8px] bg-[#ebebeb] pl-[6px]">
            <p>Node | Display Properties</p>
            <p>Line | Display Properties</p>
            <p>Member | Member Type</p>
          </div>
          <ul className="pl-[5px]">
            <li className="flex items-center gap-[3px]"><i className="size-[6px] bg-[#ccffff]" />Beam</li>
            <li className="flex items-center gap-[3px]"><i className="size-[6px] bg-[#ff0000]" />Truss (only N)</li>
            <li className="flex items-center gap-[3px]"><i className="size-[6px] bg-[#8a8aff]" />Tension</li>
          </ul>
          <p className="mt-[6px] bg-[#ebebeb] pl-[6px] whitespace-nowrap">Member Set | Display Properties</p>
        </div>
        <div className="w-[83px]">
          <p className="flex justify-end whitespace-nowrap">In Default Axonometric Direction</p>
          <div className="mt-[2px] border border-[#b0b0b0] px-[2px] pt-[2px] pb-[2px]">
            <p className="whitespace-nowrap">Steel Design | Mode Shapes</p>
            <div className="mt-[4px] flex h-[143px]">
              <div className="flex w-[26px] flex-col justify-between">
                {scaleValues.map((v) => (
                  <span key={v}>{v}</span>
                ))}
              </div>
              <div className="my-[4px] flex w-[24px] flex-col">
                {shares.map(([color]) => (
                  <div key={color} className={clsx('flex-1 border-b border-white/60', color)} />
                ))}
              </div>
              <div className="my-[4px] flex flex-1 flex-col pr-[2px]">
                {shares.map(([color, share]) => (
                  <span key={color} className="flex flex-1 items-center justify-end">
                    {share}
                  </span>
                ))}
              </div>
            </div>
          </div>
        </div>
      </div>
      <HallModel />
      <div className="mt-auto px-[3px] pb-px">
        <svg width="62" height="46" viewBox="0 0 62 46">
          <Axes x={41} y={5} />
        </svg>
        <p className="mt-[4px] font-bold">Max. of all Design Checks | max : 0.958 | min : 0.051</p>
        <p className="font-bold">Members | max η : 0.958 | min η : 0.051</p>
        <p className="font-bold">Members | max Mode Shapes : 0.16159 | min Mode Shapes : 0.00000</p>
      </div>
    </div>
  )
}

const menus = ['Protokoll', 'Bearbeiten', 'Ansicht', 'Gehe zu', 'Einfügen']

export default function App() {
  return (
    <div className="flex h-screen flex-col overflow-hidden border-x border-b border-[#1a80d8] bg-[#f7f7f7] font-['Open_Sans',sans-serif] text-[12px] text-black">
      <div className="flex h-[31px] shrink-0 items-center bg-[#0078d7] text-white">
        <svg width="14" height="16" viewBox="0 0 14 16" className="ml-[9px]">
          <path d="M0.5 0.5 H9.5 L13.5 4.5 V15.5 H0.5 Z" fill="#fff" stroke="#444" />
          <path d="M2.5 3.5 H8.5 M2.5 6 H11.5 M2.5 8.5 H11.5 M2.5 11 H11.5 M2.5 13.3 H11.5" stroke="#444" />
        </svg>
        <span className="flex-1 pl-[6px]">Ausdruckprotokoll - [ 1 - Stahlhalle ]</span>
        <button aria-label="Minimieren" className="flex w-[45px] justify-center">
          <svg width="10" height="10" viewBox="0 0 10 10"><path d="M0 5.5 H10" stroke="#fff" /></svg>
        </button>
        <button aria-label="Maximieren" className="flex w-[45px] justify-center">
          <svg width="10" height="10" viewBox="0 0 10 10"><path d="M0.5 0.5 H9.5 V9.5 H0.5 Z" fill="none" stroke="#fff" /></svg>
        </button>
        <button aria-label="Schließen" className="flex w-[47px] justify-center">
          <svg width="10" height="10" viewBox="0 0 10 10"><path d="M0 0 L10 10 M10 0 L0 10" stroke="#fff" /></svg>
        </button>
      </div>
      <nav className="flex h-[19px] shrink-0 items-center gap-[16px] pt-px pl-[8px] text-[11px]">
        {menus.map((m) => (
          <button key={m}>{m}</button>
        ))}
      </nav>
      <Toolbar />
      <div className="flex min-h-0 flex-1">
        <Navigator />
        <div className="flex min-w-0 flex-1 pt-[2px] pl-[4px]">
          <main className="flex min-w-0 flex-1 items-center gap-[29px] bg-[#ababab] px-[29px] pb-[2px]">
            <Sheet pageNo="75/90" part="STAHL" badge="13.8.1" title="AUSNUTZUNG AN STÄBEN STABSATZWEISE" right="Stahlbemessung">
              <CheckTable />
            </Sheet>
            <Sheet
              pageNo="76/90"
              part="MODEL"
              badge="Graphic"
              title="STEEL DESIGN: MAX. OF ALL DESIGN CHECKS, IN DEFAULT AXONOMETRIC DIRECTION"
              right="Steel Design"
            >
              <ModelGraphic />
            </Sheet>
          </main>
          <div className="flex w-[17px] flex-col items-center border-l border-white bg-[#f0f0f0]">
            <div className="flex h-[18px] items-center">
              <Chevron up />
            </div>
            <div className="flex w-full flex-1 flex-col">
              <div className="flex-[877]" />
              <div className="flex-[23] bg-[#cdcdcd]" />
              <div className="flex-[165]" />
            </div>
            <div className="flex h-[18px] items-center">
              <Chevron />
            </div>
          </div>
        </div>
      </div>
      <footer className="flex h-[18px] shrink-0 items-center justify-end border-y border-[#5a5f66] bg-linear-to-b from-[#eef2f7] to-[#a9bcd6] text-[11px]">
        <span className="w-[88px]">STAHL</span>
        <span className="w-[91px] border-l border-[#c9d3df] pl-[4px]">Seiten: 90</span>
        <span className="w-[91px] border-l border-[#c9d3df] pl-[4px]">Seite: 75</span>
        <span className="h-[12px] w-[19px] border-l border-[#c9d3df]" />
      </footer>
    </div>
  )
}
